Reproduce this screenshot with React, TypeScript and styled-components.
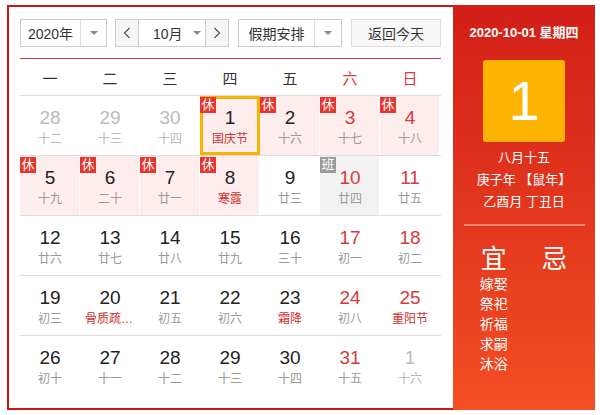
import React from "react";
import styled, { createGlobalStyle } from "styled-components";

const GlobalStyle = createGlobalStyle`
  html, body { margin: 0; padding: 0; background: #fff; }
  body { font-family: "Liberation Sans", "Noto Sans CJK SC", sans-serif; color: #333; }
  * { box-sizing: border-box; }
`;

const Frame = styled.div`
  margin: 5px 0 0 7px;
  width: 588px;
  height: 405px;
  border: 2px solid #c8161d;
  display: flex;
`;

const Main = styled.div`
  width: 444px;
  padding: 12px 12px 0 11px;
`;

const Toolbar = styled.div`
  display: flex;
  height: 28px;
`;

const Box = styled.div<{ $w: number; $ml?: number }>`
  width: ${(p) => p.$w}px;
  margin-left: ${(p) => p.$ml ?? 0}px;
  height: 28px;
  border: 1px solid #ccc;
  display: flex;
  font-size: 14px;
  color: #333;
  background: #fff;
`;

const SelectText = styled.div`
  flex: 1;
  display: flex;
  align-items: center;
  justify-content: center;
`;

const ArrowCell = styled.div<{ $w: number; $divider?: boolean }>`
  width: ${(p) => p.$w}px;
  border-left: ${(p) => (p.$divider ? "1px solid #ddd" : "none")};
  display: flex;
  align-items: center;
  justify-content: center;
`;

const Triangle = styled.span`
  width: 0;
  height: 0;
  border-left: 4px solid transparent;
  border-right: 4px solid transparent;
  border-top: 4px solid #888;
`;

const NavBtn = styled.div<{ $side: "l" | "r" }>`
  width: 23px;
  background: #f6f6f6;
  display: flex;
  align-items: center;
  justify-content: center;
  ${(p) => (p.$side === "l" ? "border-right: 1px solid #ccc;" : "border-left: 1px solid #ccc;")}
`;

const MonthLabel = styled.div`
  flex: 1;
  display: flex;
  align-items: center;
  padding-left: 14px;
  gap: 10px;
`;

const TodayBtn = styled.div`
  width: 90px;
  margin-left: 9px;
  height: 28px;
  border: 1px solid #ddd;
  background: #f7f7f7;
  font-size: 14px;
  color: #333;
  display: flex;
  align-items: center;
  justify-content: center;
`;

const RedLine = styled.div`
  margin-top: 11px;
  width: 421px;
  height: 1px;
  background: #d8383a;
`;

const WeekHeader = styled.div`
  display: grid;
  grid-template-columns: repeat(7, 60px);
  height: 36px;
  align-items: center;
`;

const WeekDay = styled.div<{ $red?: boolean }>`
  text-align: center;
  font-size: 15px;
  color: ${(p) => (p.$red ? "#d9393b" : "#333")};
`;

const Row = styled.div`
  display: grid;
  grid-template-columns: repeat(7, 60px);
  width: 421px;
  border-top: 1px solid #dcdcdc;
`;

type Kind = "normal" | "holiday" | "work";

const Cell = styled.div<{ $kind: Kind; $selected?: boolean }>`
  position: relative;
  height: 59px;
  display: flex;
  flex-direction: column;
  align-items: center;
  padding-top: 11px;
  background: ${(p) =>
    p.$kind === "holiday" ? "#fdeded" : p.$kind === "work" ? "#f2f2f2" : "transparent"};
  box-shadow: ${(p) =>
    p.$selected ? "inset 0 0 0 3px #f5b400" : "inset -1px 0 0 #fff"};
`;

const DayNum = styled.div<{ $tone: "dark" | "red" | "muted" }>`
  font-size: 19px;
  line-height: 22px;
  color: ${(p) => (p.$tone === "red" ? "#d9393b" : p.$tone === "muted" ? "#bbb" : "#222")};
`;

const Lunar = styled.div<{ $tone: "gray" | "red" | "muted" }>`
  margin-top: 2px;
  font-size: 12px;
  line-height: 16px;
  max-width: 50px;
  white-space: nowrap;
  overflow: hidden;
  text-overflow: ellipsis;
  color: ${(p) => (p.$tone === "red" ? "#d0312f" : p.$tone === "muted" ? "#bbb" : "#999")};
`;

const Badge = styled.span<{ $work?: boolean }>`
  position: absolute;
  top: 1px;
  left: 0;
  width: 16px;
  height: 16px;
  font-size: 13px;
  line-height: 16px;
  text-align: center;
  color: #fff;
  background: ${(p) => (p.$work ? "#9a9a9a" : "#e8352f")};
`;

const Side = styled.div`
  width: 142px;
  margin: -2px -2px -2px 0;
  background: linear-gradient(180deg, #d21f18 0%, #e2361d 50%, #f34e24 100%);
  color: #fff;
  display: flex;
  flex-direction: column;
  align-items: center;
`;

const SideDate = styled.div`
  margin-top: 18px;
  font-size: 13px;
  font-weight: bold;
  line-height: 20px;
`;

const BigDay = styled.div`
  margin-top: 17px;
  width: 82px;
  height: 82px;
  border-radius: 3px;
  background: #fcb400;
  font-size: 56px;
  line-height: 82px;
  text-align: center;
  color: #fff;
`;

const LunarInfo = styled.div`
  margin-top: 5px;
  font-size: 13px;
  line-height: 22px;
  text-align: center;
`;

const Sep = styled.div`
  margin-top: 11px;
  width: 121px;
  height: 2px;
  background: #f28a73;
`;

const YiJi = styled.div`
  width: 121px;
  display: grid;
  grid-template-columns: 1fr 1fr;
`;

const YiJiCol = styled.div`
  display: flex;
  flex-direction: column;
  align-items: center;
`;

const YiJiTitle = styled.div`
  margin-top: 18px;
  font-size: 26px;
  line-height: 30px;
`;

const YiJiItem = styled.div`
  font-size: 14px;
  line-height: 20px;
  &:first-of-type { margin-top: 1px; }
`;

const Chevron = ({ dir }: { dir: "l" | "r" }) => (
  <svg width="8" height="12" viewBox="0 0 8 12">
    <path
      d={dir === "l" ? "M6.5 1 L1.5 6 L6.5 11" : "M1.5 1 L6.5 6 L1.5 11"}
      fill="none"
      stroke="#555"
      strokeWidth="1.2"
    />
  </svg>
);

type Day = {
  n: number;
  l: string;
  other?: boolean;
  kind?: Kind;
  red?: boolean;
  lred?: boolean;
  sel?: boolean;
};

const weeks: Day[][] = [
  [
    { n: 28, l: "十二", other: true },
    { n: 29, l: "十三", other: true },
    { n: 30, l: "十四", other: true },
    { n: 1, l: "国庆节", kind: "holiday", lred: true, sel: true },
    { n: 2, l: "十六", kind: "holiday" },
    { n: 3, l: "十七", kind: "holiday", red: true },
    { n: 4, l: "十八", kind: "holiday", red: true },
  ],
  [
    { n: 5, l: "十九", kind: "holiday" },
    { n: 6, l: "二十", kind: "holiday" },
    { n: 7, l: "廿一", kind: "holiday" },
    { n: 8, l: "寒露", kind: "holiday", lred: true },
    { n: 9, l: "廿三" },
    { n: 10, l: "廿四", kind: "work", red: true },
    { n: 11, l: "廿五", red: true },
  ],
  [
    { n: 12, l: "廿六" },
    { n: 13, l: "廿七" },
    { n: 14, l: "廿八" },
    { n: 15, l: "廿九" },
    { n: 16, l: "三十" },
    { n: 17, l: "初一", red: true },
    { n: 18, l: "初二", red: true },
  ],
  [
    { n: 19, l: "初三" },
    { n: 20, l: "骨质疏松日", lred: true },
    { n: 21, l: "初五" },
    { n: 22, l: "初六" },
    { n: 23, l: "霜降", lred: true },
    { n: 24, l: "初八", red: true },
    { n: 25, l: "重阳节", red: true, lred: true },
  ],
  [
    { n: 26, l: "初十" },
    { n: 27, l: "十一" },
    { n: 28, l: "十二" },
    { n: 29, l: "十三" },
    { n: 30, l: "十四" },
    { n: 31, l: "十五", red: true },
    { n: 1, l: "十六", other: true },
  ],
];

const weekNames = ["一", "二", "三", "四", "五", "六", "日"];
const yi = ["嫁娶", "祭祀", "祈福", "求嗣", "沐浴"];

export default function App() {
  return (
    <>
      <GlobalStyle />
      <Frame>
        <Main>
          <Toolbar>
            <Box $w={87}>
              <SelectText>2020年</SelectText>
              <ArrowCell $w={26} $divider>
                <Triangle />
              </ArrowCell>
            </Box>
            <Box $w={114} $ml={8}>
              <NavBtn $side="l">
                <Chevron dir="l" />
              </NavBtn>
              <MonthLabel>
                10月
                <Triangle />
              </MonthLabel>
              <NavBtn $side="r">
                <Chevron dir="r" />
              </NavBtn>
            </Box>
            <Box $w={104} $ml={9}>
              <SelectText>假期安排</SelectText>
              <ArrowCell $w={27} $divider>
                <Triangle />
              </ArrowCell>
            </Box>
            <TodayBtn>返回今天</TodayBtn>
          </Toolbar>
          <RedLine />
          <WeekHeader>
            {weekNames.map((w, i) => (
              <WeekDay key={w} $red={i >= 5}>
                {w}
              </WeekDay>
            ))}
          </WeekHeader>
          {weeks.map((week, wi) => (
            <Row key={wi}>
              {week.map((d, di) => (
                <Cell key={di} $kind={d.kind ?? "normal"} $selected={d.sel}>
                  {d.kind === "holiday" && <Badge>休</Badge>}
                  {d.kind === "work" && <Badge $work>班</Badge>}
                  <DayNum $tone={d.other ? "muted" : d.red ? "red" : "dark"}>{d.n}</DayNum>
                  <Lunar $tone={d.other ? "muted" : d.lred ? "red" : "gray"}>{d.l}</Lunar>
                </Cell>
              ))}
            </Row>
          ))}
        </Main>
        <Side>
          <SideDate>2020-10-01 星期四</SideDate>
          <BigDay>1</BigDay>
          <LunarInfo>
            八月十五
            <br />
            庚子年 【鼠年】
            <br />
            乙酉月 丁丑日
          </LunarInfo>
          <Sep />
          <YiJi>
            <YiJiCol>
              <YiJiTitle>宜</YiJiTitle>
              {yi.map((y) => (
                <YiJiItem key={y}>{y}</YiJiItem>
              ))}
            </YiJiCol>
            <YiJiCol>
              <YiJiTitle>忌</YiJiTitle>
            </YiJiCol>
          </YiJi>
        </Side>
      </Frame>
    </>
  );
}
